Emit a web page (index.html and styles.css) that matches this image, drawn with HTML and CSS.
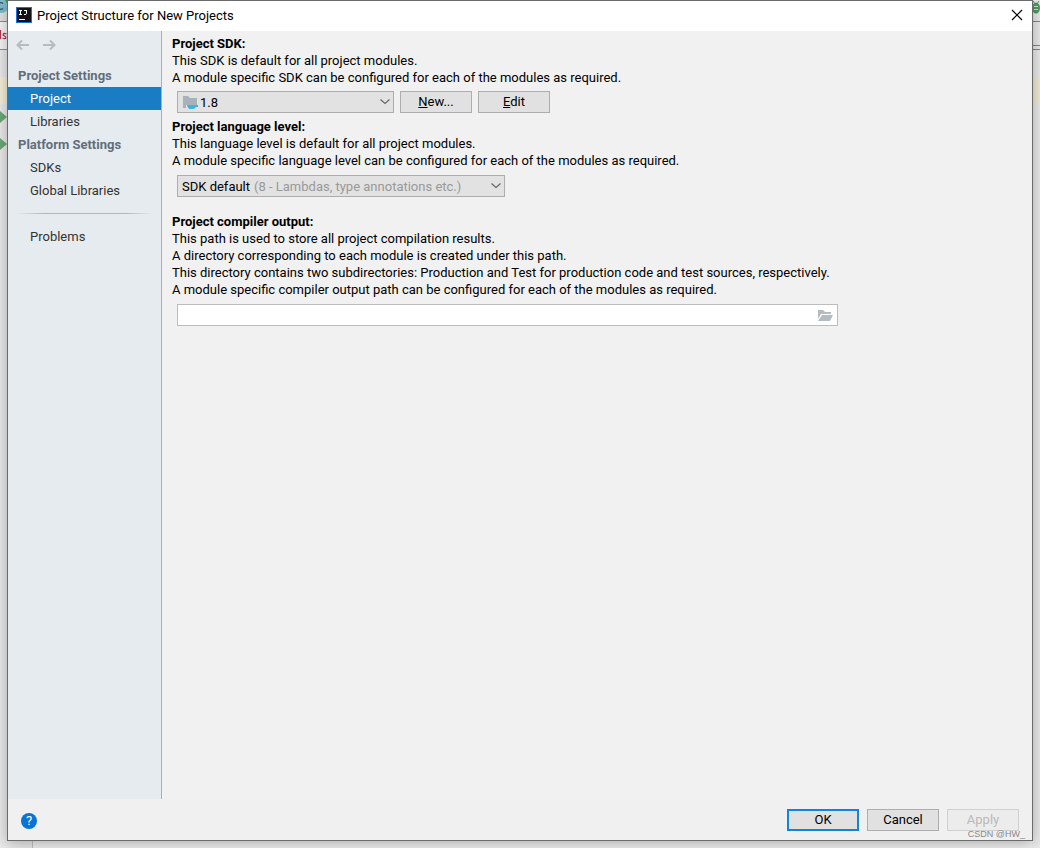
FILE: index.html
```html
<!DOCTYPE html>
<html lang="en">
<head>
<meta charset="utf-8">
<title>Project Structure for New Projects</title>
<link rel="stylesheet" href="styles.css">
</head>
<body>
<div class="desktop">
  <div class="editor editor-left" aria-hidden="true">
    <svg class="edge-art" width="8" height="160" viewBox="0 0 8 160">
      <rect width="8" height="22" fill="#e4e4e4"/>
      <circle cx="1" cy="5" r="8" fill="#7fbcd0"/>
      <path d="M5 0h3v5z" fill="#4f9b3a"/>
      <path d="M3 3.500a3.200 3.200 0 1 0 0 5" fill="none" stroke="#40535b" stroke-width="1.200"/>
      <rect y="22" width="8" height="27" fill="#f6f6f6"/>
      <path d="M0 21.500h8M0 49.500h8" stroke="#909090"/>
      <path d="M.5 30v9M6.500 34c-4-2-4 1-2 2s2 4-2 2" fill="none" stroke="#b5364c" stroke-width="1.300"/>
      <rect y="77" width="8" height="27" fill="#f6f0d9"/>
      <path d="M0 111l7 6-7 6zM0 138l7 6-7 6z" fill="#6ba877"/>
    </svg>
  </div>
  <div class="editor editor-right" aria-hidden="true">
    <svg class="edge-art" width="8" height="120" viewBox="0 0 8 120">
      <path d="M0 21.500h8M0 45.500h8M0 49.500h8" stroke="#858585"/>
      <ellipse cx="4" cy="8" rx="4" ry="5.500" fill="#4f9b60"/>
      <path d="M2 6.500h4M2 9.500h4" stroke="#d7e4d9"/>
      <path d="M1 1l2 3M7 1L5 4" stroke="#4f9b60"/>
      <rect y="77" width="8" height="27" fill="#f2ecd3"/>
    </svg>
  </div>
  <main class="dialog">
    <header class="titlebar">
      <svg class="logo" width="16" height="16" viewBox="0 0 16 16" aria-hidden="true">
        <rect width="16" height="16" fill="#1a6fd8"/>
        <rect x="1" y="1" width="14" height="14" fill="#111318"/>
        <path d="M3 3.500h3M4.500 3.500v4M3 7.500h3M8 3.500h3M10.500 3v3.500q0 1-1.500 1H8" fill="none" stroke="#fff"/>
        <path d="M3 12.500h6" stroke="#fff"/>
      </svg>
      <h1 class="title">Project Structure for New Projects</h1>
      <button class="close" aria-label="Close">
        <svg width="12" height="12" viewBox="0 0 12 12"><path d="M1 1l10 10M11 1L1 11" stroke="#000" stroke-width="1.200"/></svg>
      </button>
    </header>
    <div class="body">
      <nav class="sidebar">
        <div class="history">
          <button class="arrow" aria-label="Back"><svg width="13" height="12" viewBox="0 0 13 12"><path d="M13 6H1.500M6 1.500L1.500 6L6 10.500" fill="none" stroke="#b9bcbe" stroke-width="2"/></svg></button>
          <button class="arrow" aria-label="Forward"><svg width="13" height="12" viewBox="0 0 13 12"><path d="M0 6h11.500M7 1.500L11.500 6L7 10.500" fill="none" stroke="#b9bcbe" stroke-width="2"/></svg></button>
        </div>
        <h2 class="group">Project Settings</h2>
        <a class="item selected" href="#project" aria-current="page">Project</a>
        <a class="item" href="#libraries">Libraries</a>
        <h2 class="group">Platform Settings</h2>
        <a class="item" href="#sdks">SDKs</a>
        <a class="item" href="#global">Global Libraries</a>
        <hr class="divider">
        <a class="item" href="#problems">Problems</a>
      </nav>
      <form class="content" id="project">
        <section class="section">
          <label class="heading" for="sdk">Project SDK:</label>
          <p>This SDK is default for all project modules.</p>
          <p>A module specific SDK can be configured for each of the modules as required.</p>
          <div class="row">
            <div class="combo combo-sdk">
              <select id="sdk" class="select"><option>1.8</option></select>
              <svg class="sdk-icon" width="16" height="16" viewBox="0 0 16 16" aria-hidden="true">
                <path d="M1 1h5l2 2h7v7H4v3H1z" fill="#a7b2ba"/>
                <path d="M5 10h11v2h-2q-1 2-3 2H8q-2 0-3-4z" fill="#3fb3e0"/>
              </svg>
              <svg class="chevron" width="10" height="6" viewBox="0 0 10 6" aria-hidden="true"><path d="M.5.5L5 4.500L9.500.5" fill="none" stroke="#666" stroke-width="1.200"/></svg>
            </div>
            <button type="button" class="button"><u>N</u>ew...</button>
            <button type="button" class="button"><u>E</u>dit</button>
          </div>
        </section>
        <section class="section">
          <label class="heading" for="level">Project language level:</label>
          <p>This language level is default for all project modules.</p>
          <p>A module specific language level can be configured for each of the modules as required.</p>
          <div class="row row-level">
            <div class="combo combo-level">
              <select id="level" class="select"><option>SDK default</option></select>
              <span class="hint">(8 - Lambdas, type annotations etc.)</span>
              <svg class="chevron" width="10" height="6" viewBox="0 0 10 6" aria-hidden="true"><path d="M.5.5L5 4.500L9.500.5" fill="none" stroke="#666" stroke-width="1.200"/></svg>
            </div>
          </div>
        </section>
        <section class="section section-output">
          <label class="heading" for="output">Project compiler output:</label>
          <p>This path is used to store all project compilation results.</p>
          <p>A directory corresponding to each module is created under this path.</p>
          <p>This directory contains two subdirectories: Production and Test for production code and test sources, respectively.</p>
          <p>A module specific compiler output path can be configured for each of the modules as required.</p>
          <div class="path">
            <input id="output" class="path-input" type="text">
            <button type="button" class="browse" aria-label="Browse">
              <svg width="15" height="12" viewBox="0 0 15 12"><path d="M0 0h5l2 2h6v2H3L0 9z" fill="#b4bcc2"/><path d="M4 5h11l-3 6H0z" fill="#b4bcc2"/></svg>
            </button>
          </div>
        </section>
      </form>
    </div>
    <footer class="footer">
      <button class="help" aria-label="Help">?</button>
      <div class="actions">
        <button class="button primary">OK</button>
        <button class="button">Cancel</button>
        <button class="button" disabled>Apply</button>
      </div>
    </footer>
    <span class="watermark">CSDN @HW_</span>
  </main>
</div>
</body>
</html>
```
FILE: styles.css
```css
* { box-sizing: border-box; }
body { margin: 0; font: 13px/17px Roboto, sans-serif; color: #000; }
h1, h2, p { margin: 0; font: inherit; }
button, select, input { font: inherit; color: inherit; }
.desktop { position: relative; display: flex; min-height: 100vh; padding: 0 7px; background: #f0f0f0; overflow: hidden; }
.editor { position: absolute; top: 0; bottom: 0; background: #ebebeb; }
.editor-left { left: 0; width: 33px; border-right: 1px solid #c4c4c4; }
.editor-right { right: 0; width: 8px; }
.edge-art { display: block; }
.dialog { position: relative; flex: 1; display: flex; flex-direction: column; margin-bottom: 7px; border: 1px solid #6b6b6b; background: #f0f0f0; box-shadow: 0 2px 14px rgba(0, 0, 0, .3); }
.titlebar { display: flex; align-items: center; gap: 5px; height: 30px; padding: 0 8px 2px; background: #fff; }
.title { flex: 1; }
.close { display: flex; padding: 2px 1px; border: 0; background: none; }
.body { flex: 1; display: flex; }
.sidebar { width: 154px; flex: none; border-right: 1px solid #adb0b2; background: #e6ebef; }
.history { display: flex; gap: 14px; padding: 8px 8px 0; height: 33px; align-items: flex-start; }
.arrow { display: flex; padding: 0; border: 0; background: none; }
.group { padding: 3px 10px 2px; line-height: 18px; font-weight: 700; color: #616e7c; }
.item { display: block; padding: 0 22px; line-height: 23px; color: #333; text-decoration: none; }
.selected { background: #1a7dc4; color: #fff; }
.divider { height: 1px; margin: 11px 8px; border: 0; background: linear-gradient(90deg, transparent, #b4b6b8 20%, #b4b6b8 80%, transparent); }
.content { flex: 1; padding: 4px 10px; background: #f1f1f1; }
.heading { display: block; font-weight: 700; }
.row { display: flex; gap: 6px; padding: 5px; }
.row-level { padding-top: 6px; }
.section-output { padding-top: 11px; }
.combo { position: relative; display: flex; }
.combo-sdk { width: 217px; }
.combo-level { width: 328px; }
.select { appearance: none; width: 100%; height: 22px; padding: 0 4px; border: 1px solid #adadad; border-radius: 0; background: #e2e2e2; }
.combo-sdk .select { padding-left: 22px; }
.sdk-icon { position: absolute; left: 5px; top: 4px; pointer-events: none; }
.chevron { position: absolute; right: 4px; top: 8px; pointer-events: none; }
.hint { position: absolute; left: 77px; top: 3px; color: #999; white-space: nowrap; pointer-events: none; }
.button { width: 72px; height: 22px; padding: 0; border: 1px solid #adadad; background: #e1e1e1; line-height: 18px; }
.button:disabled { border-color: #d0d0d0; background: #ececec; color: #b9b9b9; }
.primary { border: 2px solid #0f85dc; }
.path { display: flex; align-items: center; width: 661px; height: 22px; margin: 6px 5px; border: 1px solid #bcbcbc; background: #fff; }
.path-input { flex: 1; min-width: 0; height: 20px; padding: 0 4px; border: 0; background: none; outline: 0; }
.browse { display: flex; padding: 1px 4px 0 0; border: 0; background: none; }
.footer { display: flex; align-items: center; justify-content: space-between; height: 41px; padding: 2px 13px 0; }
.help { width: 16px; height: 16px; padding: 0; border: 0; border-radius: 50%; background: #0a73d9; color: #fff; line-height: 16px; }
.actions { display: flex; gap: 8px; padding-bottom: 2px; }
.watermark { position: absolute; right: 7px; bottom: 0; font: 9px/11px "Liberation Sans", sans-serif; color: #888; }
```
